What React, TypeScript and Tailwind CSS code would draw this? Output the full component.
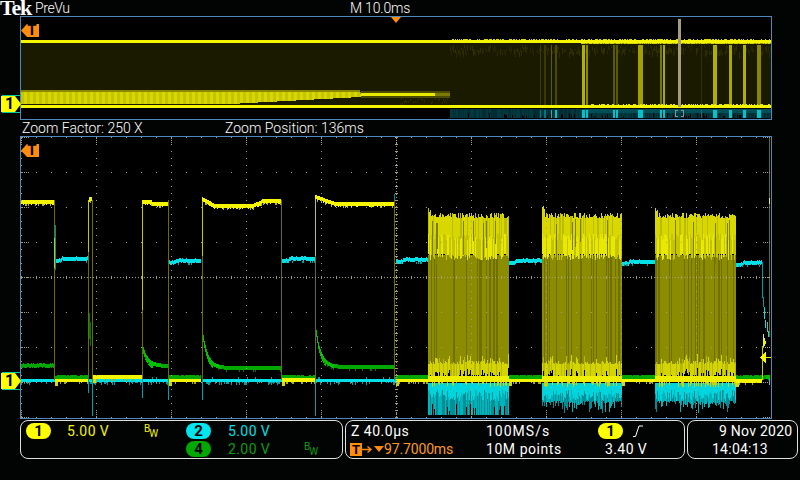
import type { ReactNode } from 'react'

type Layer = { c: string; d: string }

function mulberry(seed: number) {
  let a = seed
  return () => {
    a = (a + 0x6d2b79f5) | 0
    let t = Math.imul(a ^ (a >>> 15), 1 | a)
    t = (t + Math.imul(t ^ (t >>> 7), 61 | t)) ^ t
    return ((t ^ (t >>> 14)) >>> 0) / 4294967296
  }
}

function makeCanvas() {
  const layers: Layer[] = []
  const rect = (c: string, x: number, y: number, w: number, h: number) => {
    const d = `M${x} ${Math.round(y)}h${w}v${Math.round(h)}h${-w}z`
    const last = layers[layers.length - 1]
    if (last && last.c === c) last.d += d
    else layers.push({ c, d })
  }
  return { layers, rect }
}

const YELLOW = '#f5f500'
const OLIVE = '#6e6e00'
const CYAN = '#00e0e8'
const GREEN = '#00a800'
const DOT = '#a89f7c'

function buildMain() {
  const { layers, rect } = makeCanvas()
  const r = mulberry(7)

  // ch4
  const lows4 = [[55, 88], [93, 142], [169, 201], [282, 315], [396, 428], [509, 542], [622, 655], [736, 770]]
  lows4.forEach(([a, b]) => {
    for (let x = a; x < b; x++) rect(GREEN, x, 375 + (r() < 0.2 ? 1 : 0), 1, 4)
  })
  for (let x = 21; x < 54; x++) rect(GREEN, x, 364 - (r() < 0.3 ? 1 : 0), 1, 4)
  const decay: [number, number, number, number][] = [[142, 168, 347, 364], [202, 281, 335, 366], [315, 394, 330, 365]]
  decay.forEach(([a, b, top, end]) => {
    for (let x = a; x < b; x++) {
      const y = end - (end - top) * Math.exp(-(x - a) / 5)
      rect(x - a < 18 ? '#00c000' : GREEN, x + 1, y, 1, x - a < 10 ? 7 : 4)
      if (r() < 0.12) rect('#007a00', x + 1, y + 4, 1, 2)
    }
  })
  rect('#007a00', 89, 313, 1, 26)
  rect('#007a00', 90, 322, 1, 24)

  // ch2
  const highs2: [number, number, number][] = [[55, 88, 257], [169, 201, 259], [282, 315, 257], [396, 428, 258], [509, 542, 259], [622, 655, 260], [736, 762, 261]]
  highs2.forEach(([a, b, y]) => {
    for (let x = a; x < b; x++) {
      const settle = x - a < 7 ? 2 : 0
      rect(CYAN, x, y + settle - (r() < 0.25 ? 1 : 0), 1, 4)
      if (r() < 0.14) rect('#00a0a8', x, y + 4, 1, 2)
    }
  })
  const lows2 = [[21, 55], [89, 169], [202, 282], [315, 396]]
  lows2.forEach(([a, b]) => {
    for (let x = a; x < b; x++) {
      rect(CYAN, x, 379, 1, 3)
      if (r() < 0.25) rect('#00a0a8', x, 382, 1, 1 + Math.floor(r() * 3))
      if (r() < 0.08) rect('#00a0a8', x, 377, 1, 2)
    }
  })
  const spikes: [number, number][] = [[88, 393], [92, 416], [142, 398], [168, 400], [202, 400], [315, 416]]
  spikes.forEach(([x, y]) => rect('#00a0a8', x, 380, 1, y - 380))
  rect('#008a90', 55, 225, 1, 45)
  rect('#008a90', 168, 211, 1, 28)
  rect('#008a90', 394, 194, 1, 20)

  // ch1 edges
  const edges = [54, 88, 92, 142, 168, 202, 281, 315, 394]
  edges.forEach(x => rect(OLIVE, x, 200, 1, 180))
  rect('#c8c800', 88, 200, 1, 52)
  rect('#c8c800', 142, 200, 1, 110)
  rect('#c8c800', 202, 198, 1, 58)
  rect('#c8c800', 315, 196, 1, 60)
  rect('#c8c800', 54, 238, 1, 30)

  // ch1 levels
  const highAt = (x: number) => {
    if (x < 54) return 200
    if (x < 92) return 197
    if (x < 168) return x < 152 ? 200 : 202
    if (x < 281) {
      if (x < 215) return 197 + (x - 202) * 0.55
      if (x < 252) return 204
      if (x < 262) return 204 - (x - 252) * 0.4
      return 199
    }
    if (x < 335) return 195 + (x - 315) * 0.35
    return 202
  }
  const highs1 = [[21, 54], [89, 92], [142, 168], [202, 281], [315, 394]]
  highs1.forEach(([a, b]) => {
    for (let x = a; x < b; x++) {
      const y = highAt(x)
      rect(YELLOW, x, y, 1, 4 + (r() < 0.25 ? 1 : 0))
      if (r() < 0.14) rect('#b8b800', x, y + 4, 1, 2)
    }
  })
  const lows1: [number, number, number, number][] = [[55, 88, 379, 3], [93, 142, 375, 4], [169, 201, 379, 3], [282, 315, 378, 4], [396, 428, 379, 3], [509, 542, 379, 3], [622, 655, 379, 3], [736, 762, 379, 4]]
  lows1.forEach(([a, b, y, h]) => {
    for (let x = a; x < b; x++) {
      rect(YELLOW, x, y, 1, h)
      if (x - a < 3) rect('#d8d800', x, y + h, 1, 4)
      else if (r() < 0.2) rect('#a8a800', x, y + h, 1, 2)
    }
  })

  // bursts
  const bursts: [number, number, number, boolean][] = [[428, 509, 208, true], [542, 622, 206, false], [655, 736, 207, false]]
  bursts.forEach(([a, b, start, flat]) => {
    for (let x = a; x < b; x++) {
      const cyanEnd = flat ? (r() < 0.15 ? 404 + Math.floor(r() * 8) : 415) : 401 + Math.floor(r() * r() * 14)
      const brightEnd = 390 + Math.floor(r() * 12)
      rect('#00d4dc', x, 383, 1, Math.min(brightEnd, cyanEnd) - 383)
      if (cyanEnd > brightEnd) rect(r() < 0.45 ? '#008e96' : '#00b4bc', x, brightEnd, 1, cyanEnd - brightEnd)
      const top = (x - a < 3 ? start : 213) + Math.floor(r() * 6)
      const mid = 254 + Math.floor(r() * 7)
      rect(r() < 0.22 ? '#707000' : '#8c8c00', x, 255, 1, 113)
      rect(r() < 0.2 ? '#bcbc00' : '#d8d800', x, top, 1, mid - top - 20)
      rect(r() < 0.5 ? '#e8e800' : '#c4c400', x, mid - 20, 1, 20)
      if (r() < 0.08) rect('#7c7c00', x, top + 6, 1, 20 + r() * 25)
      const low = 364 - Math.floor(r() * r() * 12)
      rect(r() < 0.3 ? '#b8b800' : '#d4d400', x, low, 1, 14)
      rect('#eeee00', x, 376, 1, 6)
      if (r() < 0.35) rect('#d0d000', x, 382, 1, 2 + Math.floor(r() * 4))
    }
  })

  // tail at the right edge
  rect('#009aa0', 762, 262, 1, 36)
  rect('#009aa0', 763, 297, 1, 10)
  rect(CYAN, 764, 307, 1, 12)
  rect(CYAN, 765, 320, 1, 8)
  rect(CYAN, 767, 322, 1, 10)
  rect(CYAN, 768, 331, 1, 6)
  rect('#6e6e00', 769, 137, 1, 200)
  rect(YELLOW, 769, 198, 1, 6)
  rect('#c8c800', 762, 346, 1, 34)
  rect(YELLOW, 763, 334, 1, 14)
  rect(YELLOW, 764, 338, 1, 8)
  rect(YELLOW, 765, 341, 1, 3)
  rect(CYAN, 769, 375, 1, 10)
  rect('#00c000', 766, 375, 4, 4)

  // level marker
  for (let i = 0; i < 6; i++) rect(YELLOW, 760 + i, 357 - i, 1, 1 + i * 2)
  rect(YELLOW, 766, 357, 5, 1)

  // graticule
  for (let i = 0; i <= 10; i++) {
    const x = 21 + i * 75
    for (let y = 137; y <= 417; y += 7) rect(DOT, x, y, 1, 1)
  }
  for (let j = 0; j <= 8; j++) {
    const y = 137 + j * 35
    for (let x = 21; x <= 771; x += 15) rect(DOT, x, y, 1, 1)
  }
  for (let x = 21; x <= 771; x += 3) rect(DOT, x, 277, 1, 1)
  for (let x = 21; x <= 771; x += 15) rect(DOT, x, 276, 1, 3)
  for (let y = 137; y <= 417; y += 3) rect(DOT, 396, y, 1, 1)
  for (let y = 137; y <= 417; y += 7) rect(DOT, 395, y, 3, 1)
  for (let i = 0; i <= 10; i++) {
    const x = 21 + i * 75
    for (let k = 0; k < 4; k++) {
      rect(DOT, x, 138 + k * 2, 1, 1)
      rect(DOT, x, 416 - k * 2, 1, 1)
    }
  }
  for (let j = 0; j <= 8; j++) {
    const y = 137 + j * 35
    for (let k = 0; k < 4; k++) {
      rect(DOT, 22 + k * 2, y, 1, 1)
      rect(DOT, 769 - k * 2, y, 1, 1)
    }
  }
  return layers
}

function buildPrevu() {
  const { layers, rect } = makeCanvas()
  const r = mulberry(21)

  rect('#1a1a00', 21, 43, 750, 62)

  // speckle along the top after the burst starts
  for (let x = 450; x < 771; x++) {
    if (r() < 0.7) rect(r() < 0.5 ? '#2e2e00' : '#262600', x, 45 + Math.floor(r() * 8), 1, 2 + Math.floor(r() * 6))
  }

  // teal burst envelope
  for (let x = 450; x < 771; x++) {
    const end = r() < 0.16 ? 113 + Math.floor(r() * 4) : 118
    rect(r() < 0.5 ? '#003a40' : '#002c32', x, 109, 1, end - 109)
  }
  for (let x = 582; x < 771; x++) rect('#004e56', x, 109, 1, 4)

  // decaying envelope on the left
  for (let x = 21; x < 450; x++) {
    let top = 90
    let bot = 104
    if (x > 230 && x < 360) bot = 104 - ((x - 230) / 130) * 7
    if (x >= 360) {
      top = 92
      bot = 97
    }
    if (x > 360 && x < 450) {
      const c = x < 435 ? '#e8e800' : '#7a7a00'
      rect('#4a4a00', x, 91, 1, 7)
      rect(c, x, 93, 1, 3)
    } else {
      rect('#8a8a00', x, top, 1, 2)
      rect(x % 6 < 3 ? '#d8d800' : '#c4c400', x, top + 2, 1, bot - top - 2)
    }
  }
  for (let x = 400; x < 450; x++) {
    if (r() < 0.5) rect('#2c2c00', x, 98 + Math.floor(r() * 6), 1, 2)
  }

  // vertical activity
  const bars: [number, number, string][] = [
    [540, 1, '#3a3a00'], [544, 2, '#3a3a00'], [551, 1, '#5a5a00'], [555, 2, '#4a4a00'],
    [582, 3, '#b0b000'], [586, 2, '#8a8a00'], [613, 2, '#5a5a00'], [616, 2, '#5a5a00'],
    [638, 5, '#a0a000'], [660, 2, '#787800'], [663, 2, '#a8a800'], [701, 1, '#303000'],
    [713, 4, '#b0b000'], [729, 3, '#a8a800'], [743, 3, '#b0b000'], [757, 4, '#868600'],
  ]
  bars.forEach(([x, w, c]) => {
    rect(c, x, 45, w, 61)
    if (c === '#303000' || c === '#3a3a00') rect('#00787e', x, 110, w, 8)
    else rect('#00c4cc', x, 110, w, 8)
  })

  // rails
  for (let x = 21; x < 771; x++) {
    const noisy = x > 450
    rect(YELLOW, x, 40, 1, 3)
    if (noisy && r() < 0.5) rect('#d8d800', x, 39, 1, 1)
    if (noisy && x > 580) rect(r() < 0.7 ? '#d8d800' : '#8a8a00', x, 43, 1, 1)
    rect(YELLOW, x, 105, 1, 3)
    if (noisy && x > 590 && r() < 0.5) rect('#e0e000', x, 104, 1, 1)
  }

  // zoom window bar
  rect('#a89c80', 678, 19, 3, 88)
  rect('#8f8f8f', 675, 110, 1, 7)
  rect('#8f8f8f', 675, 110, 3, 1)
  rect('#8f8f8f', 675, 116, 3, 1)
  rect('#8f8f8f', 683, 110, 1, 7)
  rect('#8f8f8f', 681, 110, 3, 1)
  rect('#8f8f8f', 681, 116, 3, 1)
  return layers
}

const mainLayers = buildMain()
const prevuLayers = buildPrevu()

const Trace = ({ layers, viewBox, w, h }: { layers: Layer[]; viewBox: string; w: number; h: number }) => (
  <svg width={w} height={h} viewBox={viewBox} shapeRendering="crispEdges" className="block">
    {layers.map((l, i) => <path key={i} d={l.d} fill={l.c} />)}
  </svg>
)

const TFlag = ({ className }: { className: string }) => (
  <div className={`absolute left-0 flex h-[13px] w-[18px] items-center justify-end bg-[#ff8c0a] pr-[2px] text-[15px] leading-none font-bold text-black [clip-path:polygon(0_50%,6px_0,100%_0,100%_100%,6px_100%)] ${className}`}>
    T
  </div>
)

const OneMarker = ({ className }: { className: string }) => (
  <div className={`absolute left-[-20px] w-[20px] ${className}`}>
    <div className="mx-px h-px bg-[#00c8a0]" />
    <div className="flex h-[16px] items-center bg-[#ffff00] pl-[4px] text-[16px] leading-none font-bold text-black [clip-path:polygon(0_0,14px_0,100%_50%,14px_100%,0_100%)]">
      1
    </div>
    <div className="mx-px h-px bg-[#00c8a0]" />
  </div>
)

const Pill = ({ bg, children }: { bg: string; children: ReactNode }) => (
  <div className={`flex h-4 w-[25px] shrink-0 items-center justify-center rounded-full text-[15px] leading-none font-bold tracking-normal text-black ${bg}`}>
    {children}
  </div>
)

const Bw = ({ color }: { color: string }) => (
  <div className={`flex items-start text-[10px] leading-none font-normal tracking-normal ${color}`}>
    <span>B</span>
    <span className="mt-[5px] -ml-px">W</span>
  </div>
)

export default function App() {
  return (
    <div className="flex h-[480px] w-[800px] flex-col overflow-hidden bg-[#010402] font-['Roboto',sans-serif] text-[14px] font-normal tracking-[0.4px] text-white">
      {/* top line */}
      <div className="flex h-4 items-center">
        <div className="w-[35px] font-['Liberation_Serif',serif] text-[22px] leading-4 font-bold tracking-[-1.2px]">Tek</div>
        <div className="w-[315px] leading-none font-light tracking-[-0.4px]">PreVu</div>
        <div className="leading-none font-light tracking-[-0.2px]">M 10.0ms</div>
      </div>

      {/* overview */}
      <div className="relative ml-5 h-[104px] w-[752px] border border-[#4f88bc] bg-black">
        <Trace layers={prevuLayers} viewBox="21 17 750 102" w={750} h={102} />
        <TFlag className="top-[7px]" />
        <OneMarker className="top-[78px]" />
        <div className="absolute top-0 left-[370px] h-[6px] w-[10px] bg-[#ff8c0a] [clip-path:polygon(0_0,100%_0,50%_100%)]" />
      </div>

      <div className="ml-[22px] flex h-4 items-center leading-none font-light tracking-normal">
        <div className="w-[203px]">Zoom Factor: 250 X</div>
        <div>Zoom Position: 136ms</div>
      </div>

      {/* zoom window */}
      <div className="relative ml-5 h-[283px] w-[752px] border border-[#4f88bc] bg-black">
        <Trace layers={mainLayers} viewBox="21 137 750 281" w={750} h={281} />
        <TFlag className="top-[7px]" />
        <OneMarker className="top-[235px]" />
      </div>

      {/* readouts */}
      <div className="mt-px ml-5 flex h-[39px] gap-[2px] leading-none">
        <div className="flex w-[323px] rounded-lg border border-[#e0e0e0] pt-[2px] pl-[5px]">
          <div className="flex h-4 w-[160px] items-center">
            <Pill bg="bg-[#ffff00]">1</Pill>
            <div className="ml-4 w-[77px] text-[#f5f500]">5.00 V</div>
            <Bw color="text-[#f5f500]" />
          </div>
          <div className="flex flex-col gap-[2px]">
            <div className="flex h-4 items-center">
              <Pill bg="bg-[#00e5ee]">2</Pill>
              <div className="ml-[17px] text-[#00e0e8]">5.00 V</div>
            </div>
            <div className="flex h-4 items-center">
              <Pill bg="bg-[#00a800]">4</Pill>
              <div className="ml-[17px] w-[76px] text-[#0c9c0c]">2.00 V</div>
              <Bw color="text-[#0c9c0c]" />
            </div>
          </div>
        </div>

        <div className="flex w-[340px] rounded-lg border border-[#e0e0e0] pt-[2px] pl-[4px]">
          <div className="flex w-[136px] flex-col gap-[2px]">
            <div className="flex h-4 items-center pl-px tracking-[0.5px]">Z 40.0µs</div>
            <div className="flex h-4 items-center tracking-[-0.15px] text-[#ff9a1f]">
              <div className="flex h-[13px] w-3 items-center justify-center bg-[#ff8c0a] text-[13px] font-bold text-black">T</div>
              <svg width="11" height="9" viewBox="0 0 11 9" className="shrink-0">
                <path d="M0 4.5h8M5.5 1.5l3.5 3-3.5 3" stroke="#ff8c0a" strokeWidth="1.4" fill="none" />
              </svg>
              <div className="ml-px h-[6px] w-[10px] shrink-0 bg-[#ff8c0a] [clip-path:polygon(0_0,100%_0,50%_100%)]" />
              <div>97.7000ms</div>
            </div>
          </div>
          <div className="flex w-[112px] flex-col gap-[2px]">
            <div className="flex h-4 items-center tracking-[1px]">100MS/s</div>
            <div className="flex h-4 items-center tracking-[0.55px]">10M points</div>
          </div>
          <div className="flex flex-col gap-[2px]">
            <div className="flex h-4 items-center">
              <Pill bg="bg-[#ffff00]">1</Pill>
              <svg width="10" height="12" viewBox="0 0 10 12" className="ml-[10px]">
                <path d="M0 11.5h2.5L6 1h4" stroke="#ffffff" strokeWidth="1" fill="none" />
              </svg>
            </div>
            <div className="flex h-4 items-center pl-[7px]">3.40 V</div>
          </div>
        </div>

        <div className="flex w-[111px] flex-col gap-[2px] rounded-lg border border-[#e0e0e0] pt-[2px]">
          <div className="flex h-4 items-center pl-[31px] tracking-[0.25px] whitespace-nowrap">9 Nov 2020</div>
          <div className="flex h-4 items-center pl-[24px] tracking-[0.25px]">14:04:13</div>
        </div>
      </div>
    </div>
  )
}
